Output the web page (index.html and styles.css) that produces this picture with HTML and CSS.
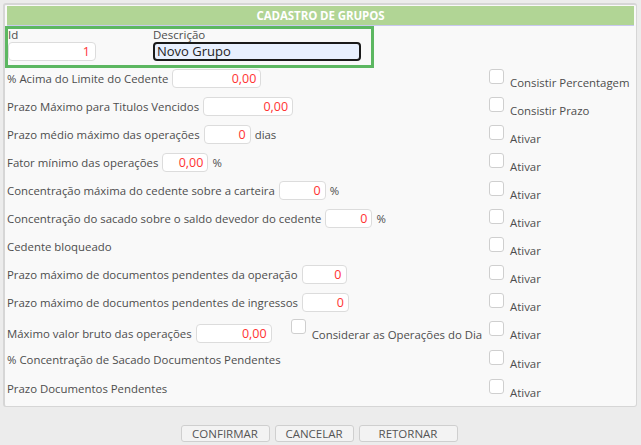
FILE: index.html
```html
<!DOCTYPE html>
<html lang="pt">
<head>
<meta charset="utf-8">
<title>Cadastro de Grupos</title>
<link rel="stylesheet" href="styles.css">
</head>
<body>
<div class="panel">
  <div class="header">CADASTRO DE GRUPOS</div>
  <div class="idbox">
    <div class="field f-id">
      <span class="top-label">Id</span>
      <div class="inp inp-id">1</div>
    </div>
    <div class="field f-desc">
      <span class="top-label">Descrição</span>
      <div class="inp inp-desc">Novo Grupo</div>
    </div>
  </div>
  <div class="rows">
    <div class="row">
      <div class="left"><span>% Acima do Limite do Cedente</span><div class="inp num w88">0,00</div></div>
      <div class="right"><span class="cb"></span><span class="cbl">Consistir Percentagem</span></div>
    </div>
    <div class="row">
      <div class="left"><span>Prazo Máximo para Titulos Vencidos</span><div class="inp num w90">0,00</div></div>
      <div class="right"><span class="cb"></span><span class="cbl">Consistir Prazo</span></div>
    </div>
    <div class="row">
      <div class="left"><span>Prazo médio máximo das operações</span><div class="inp num w47">0</div><span class="unit">dias</span></div>
      <div class="right"><span class="cb"></span><span class="cbl">Ativar</span></div>
    </div>
    <div class="row">
      <div class="left"><span>Fator mínimo das operações</span><div class="inp num w46">0,00</div><span class="unit">%</span></div>
      <div class="right"><span class="cb"></span><span class="cbl">Ativar</span></div>
    </div>
    <div class="row">
      <div class="left"><span>Concentração máxima do cedente sobre a carteira</span><div class="inp num w47">0</div><span class="unit">%</span></div>
      <div class="right"><span class="cb"></span><span class="cbl">Ativar</span></div>
    </div>
    <div class="row">
      <div class="left"><span>Concentração do sacado sobre o saldo devedor do cedente</span><div class="inp num w47">0</div><span class="unit">%</span></div>
      <div class="right"><span class="cb"></span><span class="cbl">Ativar</span></div>
    </div>
    <div class="row">
      <div class="left"><span>Cedente bloqueado</span></div>
      <div class="right"><span class="cb"></span><span class="cbl">Ativar</span></div>
    </div>
    <div class="row">
      <div class="left"><span>Prazo máximo de documentos pendentes da operação</span><div class="inp num w45">0</div></div>
      <div class="right"><span class="cb"></span><span class="cbl">Ativar</span></div>
    </div>
    <div class="row">
      <div class="left"><span>Prazo máximo de documentos pendentes de ingressos</span><div class="inp num w47">0</div></div>
      <div class="right"><span class="cb"></span><span class="cbl">Ativar</span></div>
    </div>
    <div class="row row-tall">
      <div class="left left-low"><span>Máximo valor bruto das operações</span><div class="inp num w76">0,00</div><span class="cb cb-mid"></span><span class="cbl-mid">Considerar as Operações do Dia</span></div>
      <div class="right"><span class="cb"></span><span class="cbl">Ativar</span></div>
    </div>
    <div class="row row-tall">
      <div class="left"><span>% Concentração de Sacado Documentos Pendentes</span></div>
      <div class="right"><span class="cb"></span><span class="cbl">Ativar</span></div>
    </div>
    <div class="row row-last">
      <div class="left"><span>Prazo Documentos Pendentes</span></div>
      <div class="right"><span class="cb"></span><span class="cbl">Ativar</span></div>
    </div>
  </div>
</div>
<div class="buttons">
  <button class="btn b-confirm">CONFIRMAR</button>
  <button class="btn b-cancel">CANCELAR</button>
  <button class="btn b-return">RETORNAR</button>
</div>
</body>
</html>
```

FILE: styles.css
```css
* { box-sizing: border-box; }
html, body { margin: 0; padding: 0; }
body {
  background: #ececec;
  font-family: "Open Sans", "Liberation Sans", sans-serif;
  font-size: 11.4px;
  color: #4d4d4d;
  width: 641px;
  height: 445px;
  overflow: hidden;
}
.panel {
  margin: 3px 0 0 3px;
  width: 634px;
  height: 404px;
  border: 1px solid #d6d6d6;
  border-top-width: 2px;
  border-left-width: 2px;
  border-radius: 3px;
  background: #f9f9f9;
  padding: 1px 2px 0 2px;
}
.header {
  height: 20px;
  background: #b1d595;
  border-bottom: 1px solid #c9c9ef;
  color: #fff;
  font-weight: 700;
  font-size: 11.5px;
  text-align: center;
  line-height: 19px;
  letter-spacing: -0.1px;
}
.idbox {
  margin-left: -2px;
  width: 369px;
  height: 42px;
  border: 3px solid #5cb761;
  display: flex;
  padding-left: 0;
}
.field { display: flex; flex-direction: column; }
.top-label { line-height: 12px; height: 13px; font-size: 11.5px; }
.f-id { width: 145px; }
.inp {
  background: #fff;
  border: 1px solid #dcdcdc;
  border-radius: 4px;
  height: 19px;
  line-height: 17px;
  padding: 0 4px;
  color: #f33;
  font-size: 12.5px;
}
.inp-id { width: 88px; text-align: right; padding-right: 5px; }
.inp-desc {
  width: 208px;
  background: #e8f0fe;
  border: 2px solid #1a1a1a;
  color: #222;
  font-size: 13px;
  line-height: 15px;
  padding-left: 2px;
}
.rows { display: flex; flex-direction: column; }
.row { display: flex; height: 28px; }
.row-tall { height: 29px; }
.row-last { height: 26px; }
.left {
  width: 482px;
  display: flex;
  align-items: center;
  height: 19px;
  margin-top: 1px;
  white-space: nowrap;
}
.left-low { margin-top: 4px; height: 19px; }
.left > span:first-child { margin-right: 4px; }
.num { text-align: right; }
.w88 { width: 89px; }
.w90 { width: 90px; }
.w47 { width: 47px; }
.w46 { width: 46px; }
.w45 { width: 45px; }
.w76 { width: 76px; }
.unit { margin-left: 4px; }
.right { display: flex; align-items: flex-start; padding-top: 1px; }
.cb {
  display: inline-block;
  width: 15px;
  height: 15px;
  border: 1px solid #cfcfcf;
  border-radius: 3px;
  background: #fff;
  flex: none;
}
.cbl { margin-left: 6px; margin-top: 7px; line-height: 14px; }
.cb-mid { margin-left: 19px; align-self: flex-start; margin-top: -5px; }
.cbl-mid { margin-left: 6px; margin-top: 2px; }
.buttons {
  display: flex;
  justify-content: center;
  gap: 5px;
  margin-top: 18px;
  padding-right: 3px;
}
.btn {
  font-family: "Open Sans", "Liberation Sans", sans-serif;
  font-size: 11.5px;
  color: #555;
  background: #f3f3f3;
  border: 1px solid #cfcfcf;
  border-radius: 3px;
  height: 17px;
  padding: 0;
  line-height: 15px;
}
.b-confirm { width: 89px; }
.b-cancel { width: 79px; }
.b-return { width: 99px; }
```
